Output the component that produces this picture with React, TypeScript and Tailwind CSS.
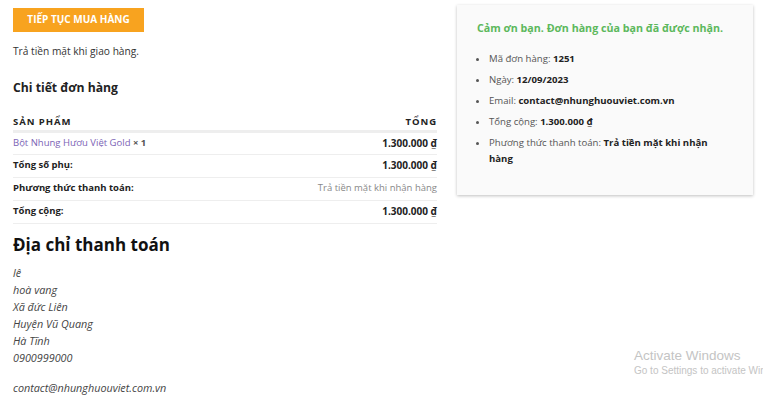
import React from 'react';

const rows = [
  { label: 'Tổng số phụ:', value: '1.300.000 ₫', muted: false },
  { label: 'Phương thức thanh toán:', value: 'Trả tiền mặt khi nhận hàng', muted: true },
  { label: 'Tổng cộng:', value: '1.300.000 ₫', muted: false },
];

const address = ['lê', 'hoà vang', 'Xã đức Liên', 'Huyện Vũ Quang', 'Hà Tĩnh', '0900999000'];

export default function App() {
  return (
    <div className="relative w-[763px] h-[400px] overflow-hidden bg-white text-[#333] font-['Open_Sans',sans-serif]">
      <div className="flex gap-5 pl-[13px] pt-[5px]">
        {/* left column: order details */}
        <div className="w-[424px]">
          <button className="h-[24px] w-[131px] bg-[#f8a31f] text-white text-[10px] font-bold uppercase">
            Tiếp tục mua hàng
          </button>
          <p className="mt-[11px] text-[10.2px] leading-[16px]">Trả tiền mặt khi giao hàng.</p>

          <h2 className="mt-[20px] text-[12.2px] leading-[18px] font-bold text-[#222]">Chi tiết đơn hàng</h2>

          <table className="mt-[18px] w-full text-[9.5px] border-collapse">
            <thead>
              <tr className="border-b-[3px] border-[#eee]">
                <th className="text-left font-bold tracking-[0.1em] leading-[14px] pb-[1px] text-[#222]">SẢN PHẨM</th>
                <th className="text-right font-bold tracking-[0.1em] leading-[14px] pb-[1px] text-[#222]">TỔNG</th>
              </tr>
            </thead>
            <tbody>
              <tr className="border-b border-[#eee] h-[23px]">
                <td className="text-[#7b63b5]">
                  Bột Nhung Hươu Việt Gold <span className="font-bold text-[#555]">× 1</span>
                </td>
                <td className="text-right font-bold text-[10px] text-[#222]">1.300.000 ₫</td>
              </tr>
              {rows.map((r) => (
                <tr key={r.label} className="border-b border-[#eee] h-[23px]">
                  <td className="font-bold text-[#222]">{r.label}</td>
                  <td className={r.muted ? 'text-right text-[#888]' : 'text-right font-bold text-[10px] text-[#222]'}>{r.value}</td>
                </tr>
              ))}
            </tbody>
          </table>

          <h2 className="mt-[9px] text-[17px] font-bold text-[#111] leading-[24px]">Địa chỉ thanh toán</h2>
          <address className="mt-[7px] text-[10.8px] italic leading-[17px] text-[#444]">
            {address.map((line) => (
              <div key={line}>{line}</div>
            ))}
            <div className="mt-[13px]">contact@nhunghuouviet.com.vn</div>
          </address>
        </div>

        {/* right column: thank-you box */}
        <div className="w-[296px] h-[190px] bg-[#fafafa] shadow-[0_1px_3px_rgba(0,0,0,0.25)] px-[20px] pt-[14px]">
          <p className="text-[10.7px] leading-[18px] font-bold text-[#5cb85c] whitespace-nowrap">Cảm ơn bạn. Đơn hàng của bạn đã được nhận.</p>
          <ul className="mt-[14px] list-disc pl-[12px] text-[9.6px] text-[#555] leading-[16px] space-y-[5px]">
            <li>Mã đơn hàng: <strong className="text-[#222]">1251</strong></li>
            <li>Ngày: <strong className="text-[#222]">12/09/2023</strong></li>
            <li>Email: <strong className="text-[#222]">contact@nhunghuouviet.com.vn</strong></li>
            <li>Tổng cộng: <strong className="text-[#222]">1.300.000 ₫</strong></li>
            <li className="pr-[20px]">Phương thức thanh toán: <strong className="text-[#222]">Trả tiền mặt khi nhận hàng</strong></li>
          </ul>
        </div>
      </div>

      {/* OS watermark overlay */}
      <div className="absolute left-[634px] top-[348px] whitespace-nowrap text-[#c4c4c4] font-['Liberation_Sans',sans-serif] pointer-events-none">
        <div className="text-[13.5px] leading-[16px]">Activate Windows</div>
        <div className="text-[10px] leading-[14px]">Go to Settings to activate Windows.</div>
      </div>
    </div>
  );
}
